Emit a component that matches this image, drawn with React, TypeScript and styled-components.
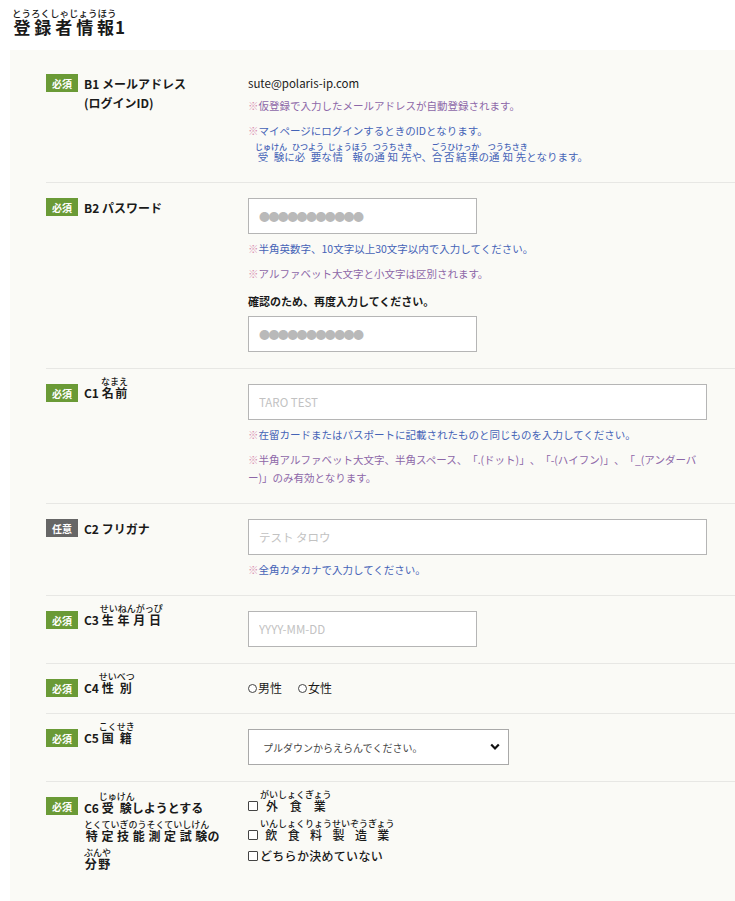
import React from "react";
import styled, { createGlobalStyle } from "styled-components";

const GlobalStyle = createGlobalStyle`
  body {
    margin: 0;
    background: #fff;
    color: #1a1a1a;
    font-family: "Noto Sans CJK JP", "Noto Sans", sans-serif;
  }
`;

const Page = styled.div`
  padding-top: 8px;
`;

const Title = styled.h1`
  margin: 0 0 12px 12px;
  font-size: 17px;
  font-weight: 700;
  line-height: 22px;
  letter-spacing: 1px;
`;

const Rb = styled.ruby<{ $size?: number }>`
  rt {
    font-size: ${(p) => p.$size ?? 9}px;
    font-weight: 500;
    letter-spacing: 0;
  }
`;

function Furi({ base, kana, size }: { base: string; kana: string; size?: number }) {
  return (
    <Rb $size={size}>
      {base}
      <rt>{kana}</rt>
    </Rb>
  );
}

const Panel = styled.div`
  margin-left: 10px;
  background: #fafaf6;
  padding: 8px 0 9px;
`;

const Row = styled.div`
  display: grid;
  grid-template-columns: 202px 1fr;
  margin-left: 36px;
  padding: 16px 0;
  & + & {
    padding-top: 15px;
    border-top: 1px solid #e7e7e4;
  }
`;

const LabelCell = styled.div`
  display: flex;
  align-items: flex-start;
  gap: 6px;
`;

const Badge = styled.span<{ $optional?: boolean }>`
  flex: none;
  width: 32px;
  height: 18px;
  display: flex;
  align-items: center;
  justify-content: center;
  background: ${(p) => (p.$optional ? "#666" : "#6a9a36")};
  color: #fff;
  font-size: 10px;
  font-weight: 700;
`;

/* ruby pushes the line box down, so pull the label back up to sit beside the badge */
const LabelText = styled.div<{ $ruby?: boolean; $tall?: boolean }>`
  font-size: 12px;
  font-weight: 700;
  line-height: ${(p) => (p.$tall ? "28px" : "19px")};
  margin-top: ${(p) => (p.$tall ? "-5px" : p.$ruby ? "-7px" : "0")};
`;

const FieldCell = styled.div`
  display: flex;
  flex-direction: column;
  align-items: flex-start;
  font-size: 11px;
`;

const Value = styled.div`
  font-size: 11.5px;
  line-height: 18px;
`;

const Note = styled.p<{ $tone?: "blue" | "red"; $gap?: number }>`
  margin: ${(p) => p.$gap ?? 7}px 0 0;
  font-size: 10.5px;
  line-height: 18px;
  text-spacing-trim: space-all;
  color: ${(p) => (p.$tone === "red" ? "#8d67a8" : "#4563b6")};
  max-width: 462px;
`;

const Mark = styled.span`
  color: #d98fb2;
`;

const RubyLine = styled.span`
  display: block;
  padding: 8px 0 0 7px;
  line-height: 18px;
`;

const Input = styled.input<{ $wide?: boolean }>`
  box-sizing: border-box;
  width: ${(p) => (p.$wide ? 459 : 229)}px;
  height: 36px;
  border: 1px solid #b5b5b5;
  background: #fff;
  padding: 0 10px;
  font-family: inherit;
  font-size: 11.5px;
  outline: none;
  &::placeholder {
    color: #c2c2c2;
  }
`;

const DotsInput = styled(Input)`
  &::placeholder {
    color: #b9b9b9;
    font-size: 11px;
    letter-spacing: -1.6px;
  }
`;

const SubHead = styled.div`
  margin: 9px 0 6px;
  font-size: 11px;
  font-weight: 700;
  line-height: 18px;
`;

const Choices = styled.div`
  display: flex;
  gap: 16px;
  font-size: 12px;
  line-height: 18px;
`;

const Choice = styled.label`
  display: flex;
  align-items: center;
  gap: 1px;
`;

const Radio = styled.input`
  appearance: none;
  margin: 0;
  width: 9px;
  height: 9px;
  border: 1px solid #444;
  border-radius: 50%;
  background: #fff;
`;

const SelectWrap = styled.div`
  position: relative;
  width: 261px;
`;

const Select = styled.select`
  box-sizing: border-box;
  width: 100%;
  height: 36px;
  appearance: none;
  border: 1px solid #a9a9a9;
  background: #fff;
  padding: 0 30px 0 14px;
  font-family: inherit;
  font-size: 10px;
  color: #444;
  outline: none;
`;

const Chevron = styled.svg`
  position: absolute;
  right: 9px;
  top: 14px;
  pointer-events: none;
`;

const Checks = styled.div`
  display: flex;
  flex-direction: column;
  margin-top: -11px;
  font-size: 12px;
  font-weight: 500;
`;

const Check = styled.label<{ $ruby?: boolean }>`
  display: flex;
  align-items: flex-end;
  gap: 2px;
  padding-top: ${(p) => (p.$ruby ? 4 : 3)}px;
  line-height: 18px;
  letter-spacing: ${(p) => (p.$ruby ? "0" : "0.3px")};
`;

const Box = styled.input`
  appearance: none;
  margin: 0 0 4px;
  width: 10px;
  height: 10px;
  border: 1px solid #444;
  border-radius: 1px;
  background: #fff;
`;

export default function App() {
  const dots = "●●●●●●●●●●●";
  return (
    <Page>
      <GlobalStyle />
      <Title>
        <Furi base="登録者情報" kana="とうろくしゃじょうほう" size={9.5} />1
      </Title>
      <Panel>
        <Row>
          <LabelCell>
            <Badge>必須</Badge>
            <LabelText>
              B1 メールアドレス
              <br />
              (ログインID)
            </LabelText>
          </LabelCell>
          <FieldCell>
            <Value>sute@polaris-ip.com</Value>
            <Note $tone="red" $gap={5}>
              <Mark>※</Mark>仮登録で入力したメールアドレスが自動登録されます。
            </Note>
            <Note>
              <Mark>※</Mark>マイページにログインするときのIDとなります。
              <RubyLine>
                <Furi base="受験" kana="じゅけん" size={8} />に
                <Furi base="必要" kana="ひつよう" size={8} />な
                <Furi base="情報" kana="じょうほう" size={8} />の
                <Furi base="通知先" kana="つうちさき" size={8} />や、
                <Furi base="合否結果" kana="ごうひけっか" size={8} />の
                <Furi base="通知先" kana="つうちさき" size={8} />となります。
              </RubyLine>
            </Note>
          </FieldCell>
        </Row>

        <Row>
          <LabelCell>
            <Badge>必須</Badge>
            <LabelText>B2 パスワード</LabelText>
          </LabelCell>
          <FieldCell>
            <DotsInput type="text" placeholder={dots} readOnly />
            <Note $gap={6}>
              <Mark>※</Mark>半角英数字、10文字以上30文字以内で入力してください。
            </Note>
            <Note $tone="red">
              <Mark>※</Mark>アルファベット大文字と小文字は区別されます。
            </Note>
            <SubHead>確認のため、再度入力してください。</SubHead>
            <DotsInput type="text" placeholder={dots} readOnly />
          </FieldCell>
        </Row>

        <Row>
          <LabelCell>
            <Badge>必須</Badge>
            <LabelText $ruby>
              C1 <Furi base="名前" kana="なまえ" />
            </LabelText>
          </LabelCell>
          <FieldCell>
            <Input $wide placeholder="TARO TEST" readOnly />
            <Note $gap={6}>
              <Mark>※</Mark>在留カードまたはパスポートに記載されたものと同じものを入力してください。
            </Note>
            <Note $tone="red">
              <Mark>※</Mark>半角アルファベット大文字、半角スペース、「.(ドット)」、「-(ハイフン)」、「_(アンダーバー)」のみ有効となります。
            </Note>
          </FieldCell>
        </Row>

        <Row>
          <LabelCell>
            <Badge $optional>任意</Badge>
            <LabelText>C2 フリガナ</LabelText>
          </LabelCell>
          <FieldCell>
            <Input $wide placeholder="テスト タロウ" readOnly />
            <Note $gap={6}>
              <Mark>※</Mark>全角カタカナで入力してください。
            </Note>
          </FieldCell>
        </Row>

        <Row>
          <LabelCell>
            <Badge>必須</Badge>
            <LabelText $ruby>
              C3 <Furi base="生年月日" kana="せいねんがっぴ" />
            </LabelText>
          </LabelCell>
          <FieldCell>
            <Input placeholder="YYYY-MM-DD" readOnly />
          </FieldCell>
        </Row>

        <Row>
          <LabelCell>
            <Badge>必須</Badge>
            <LabelText $ruby>
              C4 <Furi base="性別" kana="せいべつ" />
            </LabelText>
          </LabelCell>
          <FieldCell>
            <Choices>
              <Choice>
                <Radio type="radio" name="sex" />
                男性
              </Choice>
              <Choice>
                <Radio type="radio" name="sex" />
                女性
              </Choice>
            </Choices>
          </FieldCell>
        </Row>

        <Row>
          <LabelCell>
            <Badge>必須</Badge>
            <LabelText $ruby>
              C5 <Furi base="国籍" kana="こくせき" />
            </LabelText>
          </LabelCell>
          <FieldCell>
            <SelectWrap>
              <Select defaultValue="">
                <option value="">プルダウンからえらんでください。</option>
              </Select>
              <Chevron width="10" height="8" viewBox="0 0 10 8">
                <polyline points="1.2,1.5 5,5.5 8.8,1.5" fill="none" stroke="#111" strokeWidth="2.2" />
              </Chevron>
            </SelectWrap>
          </FieldCell>
        </Row>

        <Row>
          <LabelCell>
            <Badge>必須</Badge>
            <LabelText $tall>
              C6 <Furi base="受験" kana="じゅけん" />しようとする
              <br />
              <Furi base="特定技能測定試験" kana="とくていぎのうそくていしけん" />の
              <br />
              <Furi base="分野" kana="ぶんや" />
            </LabelText>
          </LabelCell>
          <FieldCell>
            <Checks>
              <Check $ruby>
                <Box type="checkbox" />
                <Furi base="外食業" kana="がいしょくぎょう" />
              </Check>
              <Check $ruby>
                <Box type="checkbox" />
                <Furi base="飲食料製造業" kana="いんしょくりょうせいぞうぎょう" />
              </Check>
              <Check>
                <Box type="checkbox" />
                どちらか決めていない
              </Check>
            </Checks>
          </FieldCell>
        </Row>
      </Panel>
    </Page>
  );
}
